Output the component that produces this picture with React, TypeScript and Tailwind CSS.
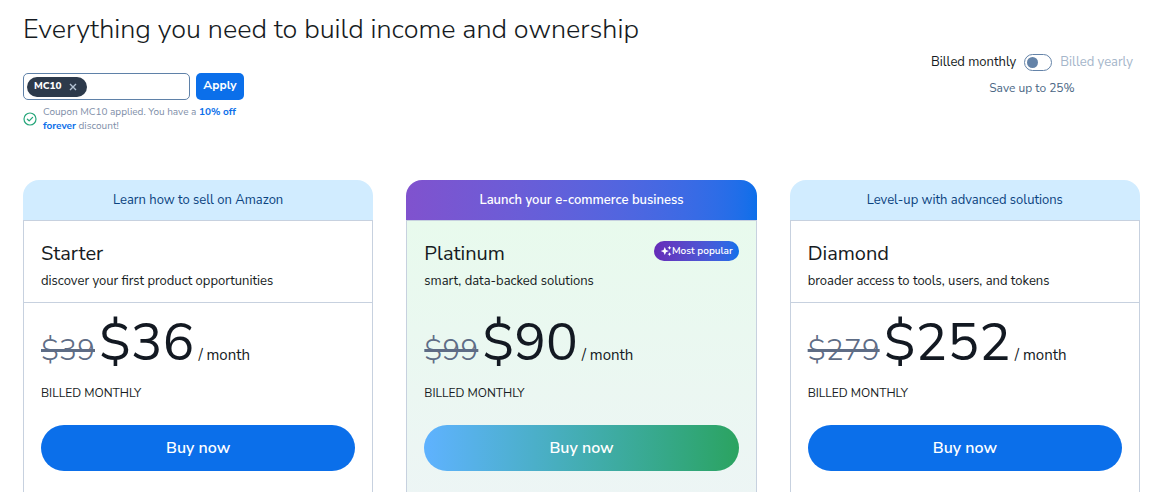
import { useState } from "react";

type Plan = {
  name: string;
  banner: string;
  tagline: string;
  oldPrice: string;
  price: string;
  popular?: boolean;
};

const plans: Plan[] = [
  {
    name: "Starter",
    banner: "Learn how to sell on Amazon",
    tagline: "discover your first product opportunities",
    oldPrice: "$39",
    price: "$36",
  },
  {
    name: "Platinum",
    banner: "Launch your e-commerce business",
    tagline: "smart, data-backed solutions",
    oldPrice: "$99",
    price: "$90",
    popular: true,
  },
  {
    name: "Diamond",
    banner: "Level-up with advanced solutions",
    tagline: "broader access to tools, users, and tokens",
    oldPrice: "$279",
    price: "$252",
  },
];

function SparkleIcon() {
  return (
    <svg viewBox="0 0 12 12" className="size-3 shrink-0" fill="currentColor" aria-hidden="true">
      <path d="M4.8 2 6 4.9 8.8 6 6 7.2 4.8 10.1 3.6 7.2.8 6 3.6 4.9Z" />
      <path d="m9.5.8.6 1.4 1.4.6-1.4.6-.6 1.4-.6-1.4-1.4-.6 1.4-.6Z" />
      <path d="m9.5 7.2.6 1.4 1.4.6-1.4.6-.6 1.4-.6-1.4-1.4-.6 1.4-.6Z" />
    </svg>
  );
}

function CheckIcon() {
  return (
    <svg viewBox="0 0 14 14" className="size-3.5 shrink-0" fill="none" stroke="#26a67a" aria-hidden="true">
      <circle cx="7" cy="7" r="6" strokeWidth="1.2" />
      <path d="m4.4 7.2 1.8 1.7 3.4-3.5" strokeWidth="1.3" strokeLinecap="round" strokeLinejoin="round" />
    </svg>
  );
}

function CouponForm() {
  const [coupon, setCoupon] = useState<string | null>("MC10");
  return (
    <form className="mt-[27px] flex w-fit flex-col gap-[5px]" onSubmit={(e) => e.preventDefault()}>
      <div className="flex gap-1.5">
        <div className="flex h-[27px] w-[167px] items-center rounded-[5px] border border-[#5f81a8] px-[3px]">
          {coupon && (
            <span className="flex h-5 w-[60px] shrink-0 items-center justify-between rounded-full bg-[#2d3a4b] pr-2.5 pl-[7px] text-[10px] font-extrabold text-white">
              {coupon}
              <button type="button" aria-label="Remove coupon" onClick={() => setCoupon(null)} className="text-[#b4c3d4]">
                <svg viewBox="0 0 8 8" className="size-2" stroke="currentColor" strokeWidth="1.4" aria-hidden="true">
                  <path d="m1 1 6 6M7 1 1 7" />
                </svg>
              </button>
            </span>
          )}
          <input aria-label="Coupon code" className="min-w-0 flex-1 bg-transparent px-1 text-xs outline-none" />
        </div>
        <button type="submit" className="h-[27px] w-12 rounded-[5px] bg-[#0b6fea] pb-1 text-xs font-bold text-white">
          Apply
        </button>
      </div>
      {coupon && (
        <p className="flex w-[221px] items-center gap-1.5 text-[10px] leading-[14px] text-[#7f8fa9]">
          <CheckIcon />
          <span>
            {`Coupon ${coupon} applied. You have a `}
            <b className="font-bold text-[#0b6fea]">10% off forever</b> discount!
          </span>
        </p>
      )}
    </form>
  );
}

function BillingToggle() {
  const [yearly, setYearly] = useState(false);
  return (
    <div className="flex flex-col items-center pt-[39px] pr-[7px]">
      <label className="flex items-center gap-2 text-[13px] leading-5 text-[#161b22]">
        <span>Billed monthly</span>
        <input
          type="checkbox"
          role="switch"
          checked={yearly}
          onChange={(e) => setYearly(e.target.checked)}
          className="h-[17px] w-7 appearance-none rounded-full border border-[#6483a8] bg-white p-0.5 before:block before:size-[11px] before:rounded-full before:bg-[#6483a8] checked:before:ml-auto"
        />
        <span className="text-[#a5b6ca]">Billed yearly</span>
      </label>
      <p className="mt-2 text-xs leading-4 text-[#4b6785]">Save up to 25%</p>
    </div>
  );
}

function PlanCard({ plan }: { plan: Plan }) {
  const { popular } = plan;
  return (
    <article className="flex flex-col">
      <p
        className={`flex h-10 items-center justify-center rounded-t-2xl text-[13px] leading-5 ${
          popular ? "bg-linear-to-r from-[#8052ce] to-[#0b6fea] font-semibold text-white" : "bg-[#d1ecff] text-[#0b4380]"
        }`}
      >
        {plan.banner}
      </p>
      <div
        className={`flex-1 border border-b-0 border-[#c7d1df] ${
          popular ? "bg-linear-to-b from-[#e8faed] to-[#edf5f5]" : "bg-white"
        }`}
      >
        <header
          className={`flex items-start justify-between border-b px-[17px] pt-5 pb-[11px] ${
            popular ? "border-transparent" : "border-[#c7d1df]"
          }`}
        >
          <div>
            <h2 className="text-xl leading-[26px]">{plan.name}</h2>
            <p className="mt-1 text-[13px] leading-5">{plan.tagline}</p>
          </div>
          {popular && (
            <span className="flex h-5 items-center rounded-full bg-linear-to-r from-[#662bb8] to-[#0b6fea] px-1.5 text-[10px] font-semibold text-white">
              <SparkleIcon />
              Most popular
            </span>
          )}
        </header>
        <div className="px-[17px] pt-2.5 pb-8">
          <p className="flex items-baseline gap-1 text-[#131922]">
            <s className="text-3xl font-light text-[#5e6c85] decoration-[3px]">{plan.oldPrice}</s>
            <span className="text-[53px] leading-[60px]">{plan.price}</span>
            <span className="text-[15px]">/ month</span>
          </p>
          <p className="mt-3 text-xs leading-4 uppercase">Billed monthly</p>
          <button
            type="button"
            className={`mt-6 h-[46px] w-full rounded-full text-base font-semibold text-white ${
              popular ? "bg-linear-to-r from-[#5fb2ff] to-[#2ba360]" : "bg-[#0b6fea]"
            }`}
          >
            Buy now
          </button>
        </div>
      </div>
    </article>
  );
}

export default function App() {
  return (
    <main className="bg-white pt-[13px] pr-4 pl-[23px] font-['Nunito_Sans','Nunito','Lato',sans-serif] text-[#161b22]">
      <section className="flex h-[167px] items-start justify-between">
        <div>
          <h1 className="text-[27px] leading-[33px] font-light">Everything you need to build income and ownership</h1>
          <CouponForm />
        </div>
        <BillingToggle />
      </section>
      <section className="grid grid-cols-3 gap-[33px]">
        {plans.map((plan) => (
          <PlanCard key={plan.name} plan={plan} />
        ))}
      </section>
    </main>
  );
}
